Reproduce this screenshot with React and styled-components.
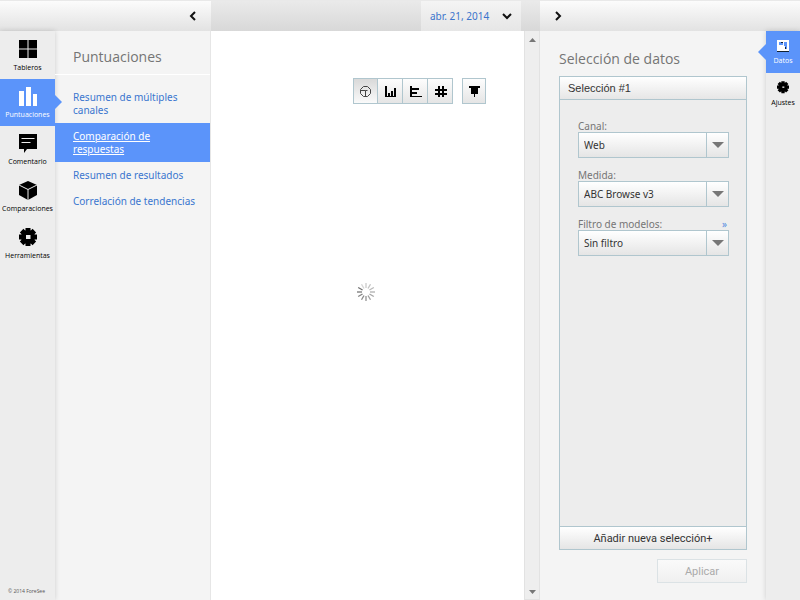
import React from "react";
import styled, { createGlobalStyle, css } from "styled-components";

const Global = createGlobalStyle`
  * { box-sizing: border-box; }
  body { margin: 0; background: #f4f4f4; font-family: "Open Sans", sans-serif; font-size: 10px; }
  button, select { font: inherit; margin: 0; }
`;

const blue = "#5b94fa";
const line = "#b0c6ce";
const textFont = `"Noto Sans", "Open Sans", sans-serif`;

const Page = styled.div`
  display: grid;
  grid-template-columns: 211px 1fr 260px;
  grid-template-rows: 31px 1fr;
  min-height: 100vh;
`;

const Bar = styled.header`
  display: flex;
  align-items: center;
  justify-content: ${(p) => p.$align || "flex-start"};
  padding: ${(p) => p.$pad || "0"};
  border-top: 1px solid #e9e9e9;
  background: ${(p) =>
    p.$dark
      ? "linear-gradient(#eaeaea, #d8d8d8)"
      : "linear-gradient(#fcfcfc, #e2e2e2)"};
`;

const IconButton = styled.button`
  display: flex;
  padding: 4px;
  border: 0;
  background: none;
  color: #111;
`;

const DateButton = styled.button`
  display: flex;
  align-items: center;
  justify-content: space-between;
  width: 100px;
  height: 30px;
  padding: 2px 9px;
  border: 0;
  background: linear-gradient(#f4f4f4, #e6e6e6);
  color: #3b74cc;
  && { font: 400 10px ${textFont}; }
  svg { color: #111; }
`;

const Left = styled.div`
  display: flex;
  border-right: 1px solid #e6e6e6;
  background: #f4f4f4;
`;

const Rail = styled.nav`
  display: flex;
  flex-direction: column;
  width: ${(p) => (p.$side === "left" ? "55px" : "34px")};
  flex: none;
  padding-top: ${(p) => (p.$side === "left" ? "1px" : "0")};
  background: #ededed;
  box-shadow: 0 0 5px rgba(0, 0, 0, 0.16);
`;

const RailLink = styled.a`
  position: relative;
  display: flex;
  flex-direction: column;
  align-items: center;
  gap: 4px;
  height: ${(p) => (p.$small ? "42px" : "47px")};
  padding-top: 8px;
  font-size: 7px;
  line-height: 10px;
  white-space: nowrap;
  text-decoration: none;
  color: #000;
  ${(p) =>
    p.$active &&
    css`
      background: ${blue};
      color: #fff;
      &::after {
        content: "";
        position: absolute;
        top: 50%;
        ${p.$small ? "right" : "left"}: 100%;
        margin-top: -8px;
        border: ${p.$small ? "8px" : "7px"} solid transparent;
        border-${p.$small ? "right" : "left"}-color: ${blue};
        border-${p.$small ? "left" : "right"}-width: 0;
      }
    `}
`;

const Copyright = styled.small`
  margin-top: auto;
  padding: 0 8px 4px;
  font-size: 5px;
  line-height: 10px;
  white-space: nowrap;
  color: #555;
`;

const Menu = styled.section`
  flex: 1;
  min-width: 0;
`;

const Title = styled.h2`
  margin: 0;
  font-size: 14px;
  font-weight: 400;
  line-height: 20px;
  color: #757575;
`;

const MenuTitle = styled(Title)`
  height: 44px;
  padding: 16px 18px 0;
  border-bottom: 1px solid #fff;
`;

const MenuList = styled.ul`
  margin: 9px 0 0;
  padding: 0;
  list-style: none;
`;

const MenuLink = styled.a`
  display: block;
  padding: 7px 9px 6px 18px;
  font: 400 10px/13px ${textFont};
  color: ${(p) => (p.$active ? "#fff" : "#3a76cf")};
  background: ${(p) => (p.$active ? blue : "none")};
  text-decoration: ${(p) => (p.$active ? "underline" : "none")};
`;

const Main = styled.main`
  display: flex;
  background: #fff;
`;

const Report = styled.div`
  display: flex;
  flex: 1;
  flex-direction: column;
`;

const Tools = styled.div`
  display: flex;
  justify-content: flex-end;
  gap: 9px;
  padding: 47px 38px 0 0;
`;

const ToolGroup = styled.div`
  display: flex;
  border: 1px solid ${line};
`;

const Tool = styled.button`
  display: flex;
  align-items: center;
  justify-content: center;
  width: ${(p) => (p.$single ? "22px" : "23px")};
  height: 24px;
  padding: 0;
  border: 0;
  background: ${(p) =>
    p.$pressed
      ? "linear-gradient(#d9d9d9, #fafafa)"
      : "linear-gradient(#fdfdfd, #e5e5e5)"};
  & + & {
    width: 25px;
    border-left: 1px solid ${line};
  }
`;

const Loading = styled.div`
  display: flex;
  justify-content: center;
  padding: 178px 3px 0 0;
`;

const ScrollTrack = styled.div`
  display: flex;
  flex-direction: column;
  justify-content: space-between;
  align-items: center;
  width: 16px;
  padding: 7px 0 5px;
  border: 1px solid #e2e2e2;
  border-top: 0;
  background: #eeeeee;
`;

const Right = styled.div`
  display: flex;
  justify-content: space-between;
  background: #f4f4f4;
`;

const Panel = styled.form`
  display: flex;
  flex: 1;
  flex-direction: column;
  padding: 18px 19px 17px 19px;
`;

const Selection = styled.section`
  display: flex;
  flex: 1;
  flex-direction: column;
  margin: 7px 0 9px;
  border: 1px solid ${line};
  background: #ededed;
`;

const SelectionTitle = styled.h3`
  margin: 0;
  padding: 0 8px;
  border-bottom: 1px solid ${line};
  background: linear-gradient(#fff, #e6e6e6);
  font: 400 11px/22px "Liberation Sans", sans-serif;
  color: #333;
`;

const Fields = styled.div`
  display: flex;
  flex: 1;
  flex-direction: column;
  gap: 11px;
  padding: 20px 17px 0 18px;
`;

const Field = styled.div`
  display: grid;
  grid-template-columns: 1fr auto;
`;

const Label = styled.label`
  font: 400 10px/12px ${textFont};
  color: #757575;
`;

const More = styled.a`
  padding-right: 2px;
  font-size: 10px;
  line-height: 12px;
  text-decoration: none;
  color: #4c87df;
`;

const SelectBox = styled.div`
  display: flex;
  grid-column: 1 / -1;
  height: 26px;
  border: 1px solid ${line};
  background: linear-gradient(#fff, #e5e5e5);
`;

const Select = styled.select`
  flex: 1;
  min-width: 0;
  padding: 0 5px;
  border: 0;
  appearance: none;
  background: none;
  && { font: 400 10px ${textFont}; }
  color: #333;
`;

const Arrow = styled.span`
  display: flex;
  align-items: center;
  justify-content: center;
  width: 22px;
  border-left: 1px solid ${line};
  pointer-events: none;
`;

const AddButton = styled.button`
  height: 23px;
  padding: 0;
  border: 0;
  border-top: 1px solid ${line};
  background: linear-gradient(#fff, #e5e5e5);
  && { font: 400 11px Roboto, sans-serif; }
  color: #333;
`;

const ApplyButton = styled.button`
  align-self: flex-end;
  width: 90px;
  height: 24px;
  border: 1px solid #dbe2e5;
  background: linear-gradient(#fafafa, #f0f0f0);
  && { font: 400 11px Roboto, sans-serif; }
  color: #aaa;
`;

const Chevron = ({ d, w = 8, h = 10 }) => (
  <svg width={w} height={h} viewBox={`0 0 ${w} ${h}`} fill="none" stroke="currentColor" strokeWidth="2">
    <path d={d} />
  </svg>
);

const Triangle = ({ w, h, up }) => (
  <svg width={w} height={h} viewBox="0 0 10 6" preserveAspectRatio="none" fill="#777">
    <path d={up ? "M0 6h10L5 0z" : "M0 0h10L5 6z"} />
  </svg>
);

const gearTeeth = (
  <>
    <circle cx="9" cy="9" r="7" />
    <path d="M6.500 0h5v18h-5zM0 6.500h18v5H0z" />
    <path d="M6.500 0h5v18h-5zM0 6.500h18v5H0z" transform="rotate(45 9 9)" />
  </>
);

const icons = {
  grid: <path d="M0 0h8.5v8.5H0zM9.5 0H18v8.5H9.5zM0 9.5h8.5V18H0zM9.5 9.5H18V18H9.5z" />,
  bars: <path d="M0 4h5v15H0zM7 0h5v19H7zM14 7h4v12h-4z" />,
  comment: (
    <>
      <path d="M0 0h18v15H8l-3 4v-4H0z" />
      <path d="M2.500 4.500h13M2.500 8.500h9" stroke="#ededed" />
    </>
  ),
  cube: (
    <>
      <path d="M9 0l9 4v10l-9 5-9-5V4z" />
      <path d="M0 4l9 4.500L18 4M9 8.500V19" fill="none" stroke="#ededed" />
    </>
  ),
  gear: (
    <>
      {gearTeeth}
      <path d="M7 7h4.500v4H7z" fill="#ededed" />
    </>
  ),
};

const Icon = ({ name, color }) => (
  <svg width="18" height="19" viewBox="0 0 18 19" fill={color || "#000"}>
    {icons[name]}
  </svg>
);

const toolIcons = {
  Circular: (
    <path
      fill="none"
      stroke="#444"
      d="M4.500 1.500h4l3 3v4l-3 3h-4l-3-3v-4zM1.500 5.500h5v6M6.500 5.500h2"
    />
  ),
  Columnas: <path d="M1 1h2v11H1zM1 11h11v1H1zM4 8h2v4H4zM7 6h2v6H7zM10 3h2v9h-2z" />,
  Barras: <path d="M1 1h2v11H1zM1 11h12v1H1zM3 3h7v2H3zM3 7h5v2H3z" />,
  Tabla: <path d="M4 1h2v11H4zM8 1h2v11H8zM1 4h12v2H1zM1 8h12v2H1z" />,
  Fijar: <path d="M1 1h11v2H1zM3 3h7v6H3zM6 9h1v3H6z" />,
};

const ToolIcon = ({ name }) => (
  <svg width="13" height="13" viewBox="0 0 13 13" shapeRendering={name === "Circular" ? "auto" : "crispEdges"}>
    {toolIcons[name]}
  </svg>
);

const sections = [
  ["grid", "Tableros"],
  ["bars", "Puntuaciones"],
  ["comment", "Comentario"],
  ["cube", "Comparaciones"],
  ["gear", "Herramientas"],
];

const reports = [
  "Resumen de múltiples canales",
  "Comparación de respuestas",
  "Resumen de resultados",
  "Correlación de tendencias",
];

const filters = [
  ["canal", "Canal:", "Web"],
  ["medida", "Medida:", "ABC Browse v3"],
  ["modelo", "Filtro de modelos:", "Sin filtro"],
];

const Spinner = () => (
  <svg width="20" height="20" viewBox="0 0 20 20" role="img" aria-label="Cargando" stroke="#555" strokeWidth="1.300">
    {Array.from({ length: 12 }, (_, i) => (
      <path key={i} d="M10 1v5" transform={`rotate(${300 - i * 30} 10 10)`} opacity={0.85 - i * 0.055} />
    ))}
  </svg>
);

export default function App() {
  return (
    <>
      <Global />
      <Page>
        <Bar $align="flex-end" $pad="0 10px 0 0">
          <IconButton aria-label="Contraer menú"><Chevron d="M6 1L2 5l4 4" /></IconButton>
        </Bar>
        <Bar $dark $align="flex-end" $pad="0 19px 0 0">
          <DateButton>
            abr. 21, 2014
            <Chevron w={10} h={7} d="M1 1l4 4 4-4" />
          </DateButton>
        </Bar>
        <Bar $pad="0 0 0 10px">
          <IconButton aria-label="Contraer panel"><Chevron d="M2 1l4 4-4 4" /></IconButton>
        </Bar>

        <Left>
          <Rail $side="left">
            {sections.map(([icon, label]) => (
              <RailLink key={label} href="#" $active={icon === "bars"}>
                <Icon name={icon} color={icon === "bars" ? "#fff" : "#000"} />
                {label}
              </RailLink>
            ))}
            <Copyright>© 2014 ForeSee</Copyright>
          </Rail>
          <Menu>
            <MenuTitle>Puntuaciones</MenuTitle>
            <MenuList>
              {reports.map((name, i) => (
                <li key={name}><MenuLink href="#" $active={i === 1}>{name}</MenuLink></li>
              ))}
            </MenuList>
          </Menu>
        </Left>

        <Main>
          <Report>
            <Tools>
              <ToolGroup>
                {["Circular", "Columnas", "Barras", "Tabla"].map((name, i) => (
                  <Tool key={name} aria-label={name} $pressed={i === 0}><ToolIcon name={name} /></Tool>
                ))}
              </ToolGroup>
              <ToolGroup>
                <Tool aria-label="Fijar" $single><ToolIcon name="Fijar" /></Tool>
              </ToolGroup>
            </Tools>
            <Loading><Spinner /></Loading>
          </Report>
          <ScrollTrack>
            <Triangle w={7} h={4} up />
            <Triangle w={7} h={4} />
          </ScrollTrack>
        </Main>

        <Right>
          <Panel onSubmit={(e) => e.preventDefault()}>
            <Title>Selección de datos</Title>
            <Selection>
              <SelectionTitle>Selección #1</SelectionTitle>
              <Fields>
                {filters.map(([id, label, value]) => (
                  <Field key={id}>
                    <Label htmlFor={id}>{label}</Label>
                    {id === "modelo" && <More href="#">»</More>}
                    <SelectBox>
                      <Select id={id}><option>{value}</option></Select>
                      <Arrow><Triangle w={12} h={6} /></Arrow>
                    </SelectBox>
                  </Field>
                ))}
              </Fields>
              <AddButton type="button">Añadir nueva selección+</AddButton>
            </Selection>
            <ApplyButton disabled>Aplicar</ApplyButton>
          </Panel>
          <Rail $side="right">
            <RailLink href="#" $small $active>
              <svg width="12" height="13" viewBox="0 0 12 13" fill="#fff" shapeRendering="crispEdges">
                <path d="M0 1h12v11H0z" />
                <path d="M2 3h4v3H2zM7 3h3v4H7zM8 7h2v3H8z" fill={blue} />
                <path d="M4 3h2v1H4zM0 12h12v1H0zM8 8h1v2H8z" fill="#123" />
              </svg>
              Datos
            </RailLink>
            <RailLink href="#" $small>
              <svg width="12" height="13" viewBox="0 0 18 19">
                {gearTeeth}
                <path d="M8 8h3v2H8z" fill="#ededed" />
              </svg>
              Ajustes
            </RailLink>
          </Rail>
        </Right>
      </Page>
    </>
  );
}
